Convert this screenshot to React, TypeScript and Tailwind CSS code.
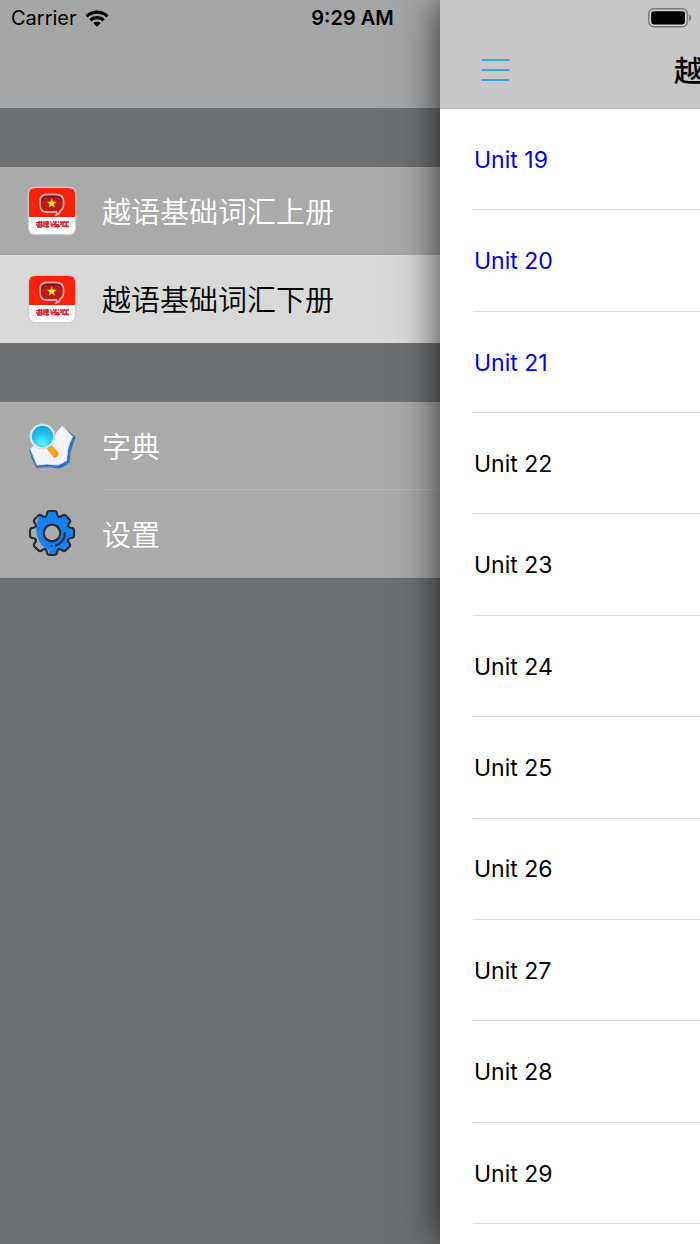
import React, { useState } from "react";

const books = ["越语基础词汇上册", "越语基础词汇下册"];
const units = [19, 20, 21, 22, 23, 24, 25, 26, 27, 28, 29];
const learned = new Set([19, 20, 21]);

function WifiIcon() {
  return (
    <svg viewBox="0 0 24 17" className="h-[17px] w-6" aria-hidden="true">
      <path d="M0.4 5.2C6.6-1.2 17.4-1.2 23.6 5.2L21.4 7.5C16.4 2.5 7.6 2.5 2.6 7.5Z" />
      <path d="M4.3 9.2C8.4 5 15.6 5 19.7 9.2L17.5 11.4C14.4 8.4 9.6 8.4 6.5 11.4Z" />
      <path d="M8.3 13.1C10.4 11.2 13.6 11.2 15.7 13.1L12 16.8Z" />
    </svg>
  );
}

function BatteryIcon() {
  return (
    <svg viewBox="0 0 44 20" className="h-5 w-11" aria-hidden="true">
      <rect x="0.8" y="0.8" width="38.6" height="18" rx="5" fill="#d2d2d2" stroke="#777" strokeWidth="1.5" />
      <rect x="3.2" y="3.2" width="33.8" height="13.2" rx="2.4" fill="#000" />
      <path d="M41.2 6.6C43.8 7.6 43.8 12 41.2 13Z" fill="#777" />
    </svg>
  );
}

function BookIcon() {
  return (
    <svg viewBox="0 0 50 50" className="h-[50px] w-[50px]" aria-hidden="true">
      <rect x="0.7" y="0.7" width="48.6" height="48.6" rx="7" fill="#c9cccc" />
      <rect x="2" y="2" width="46" height="46" rx="6" fill="#fff" />
      <path d="M2 31V8Q2 2 8 2H42Q48 2 48 8V31Z" fill="#fb200b" />
      <path d="M20 8.5H29Q36.5 8.5 36.5 15.5V18.5Q36.5 23.5 33 25Q33 28 29.5 29Q30.5 27.5 29.5 26H20Q13 26 13 19V15.5Q13 8.5 20 8.5Z" fill="#bd1a16" stroke="#c8aaa7" strokeWidth="1.8" />
      <path d="M15 15Q15.5 10.5 20 10.5H29Q34 10.5 34.5 15" fill="none" stroke="#711b18" strokeWidth="1.4" />
      <path d="M24.8 12.2L26.1 15.7L29.8 15.8L26.9 18.1L27.9 21.7L24.8 19.6L21.7 21.7L22.7 18.1L19.8 15.8L23.5 15.7Z" fill="#ffe51b" />
      <g fill="none" stroke="#d8192b" strokeWidth="1.6">
        <path d="M9 36.5H15M12 35V41M9 39H15M10 41H15M14.5 35L15 41M17 35V41M18 36H22M18 38H22M18 40.8H22M20 35V41" />
        <path d="M23.5 35.5L24.5 36.5M23.5 38H25V41M26 36H30M26 38.5H30M28 36V38M26.5 40.5H29.5V38.5M31 35.5L32 36.5M31 38V41L33 40M33 36H36V41M33 38H35M37 35.5L38.5 36.5M37 41L39 39M42 36H39.5V40.5H42" />
      </g>
    </svg>
  );
}

function DictionaryIcon() {
  return (
    <svg viewBox="0 0 50 50" className="h-[50px] w-[50px]" aria-hidden="true">
      <defs>
        <radialGradient id="lens" cx="0.5" cy="0.8" r="0.8">
          <stop offset="0" stopColor="#5cf4ff" />
          <stop offset="0.5" stopColor="#25c8f3" />
          <stop offset="1" stopColor="#17a3df" />
        </radialGradient>
        <linearGradient id="handle" x1="0" y1="0" x2="1" y2="1">
          <stop offset="0" stopColor="#d99b49" />
          <stop offset="0.5" stopColor="#ffab15" />
          <stop offset="1" stopColor="#f48512" />
        </linearGradient>
      </defs>
      <path d="M36 6L48 16.5Q45 24 43 31L42 41Q37 46 31 47Q20 44.5 10 46.5L5.5 38L3 29L8 24H27Z" fill="#2878d0" stroke="#3974b5" strokeWidth="1.2" />
      <path d="M35.5 5L45.5 15.5Q42 22 40.5 29L39.5 39.5Q35 42.5 30.5 44Q20 42 10 44L6 34L3.5 28Q7 25 10 20L25 22Q28 17 30 11Z" fill="#f4f4f6" stroke="#e4e6ea" />
      <circle cx="15.5" cy="15.5" r="12.6" fill="#e7eaed" stroke="#d5d8da" />
      <circle cx="15.5" cy="15.5" r="10.7" fill="url(#lens)" />
      <path d="M20 28Q22 24 25.5 24.5L31.5 32Q32 35.5 27 37Z" fill="url(#handle)" />
    </svg>
  );
}

const tooth =
  "M-6.7-16.2Q-5.2-17-5-19.5Q-4.8-22-2.5-22H2.5Q4.8-22 5-19.5Q5.2-17 6.7-16.2";

function SettingsIcon() {
  const angles = [0, 45, 90, 135, 180, 225, 270, 315];
  return (
    <svg viewBox="-25 -24 50 50" className="h-[50px] w-[50px]" aria-hidden="true">
      <defs>
        <clipPath id="gear-fill">
          <path d="M-6-25Q-20-12-14 5Q-11 14-3 17V25H25V-25Z" />
        </clipPath>
      </defs>
      <g fill="#1681f2" clipPath="url(#gear-fill)">
        <circle r="17.6" />
        {angles.map((a) => (
          <path key={a} d={tooth} transform={`rotate(${a})`} />
        ))}
      </g>
      <circle r="8.3" fill="#aaa" />
      <g fill="none" stroke="#252d35" strokeWidth="2.2" strokeLinejoin="round" strokeLinecap="round">
        {angles.map((a) => (
          <path key={a} d={tooth} transform={`rotate(${a})`} />
        ))}
        <circle r="8.3" />
        <path d="M13 0Q12.5 9.5 4 12.5M-0.5 13H-0.4" />
      </g>
    </svg>
  );
}

type RowProps = {
  icon: React.ReactNode;
  label: string;
  selected?: boolean;
  divided?: boolean;
  onClick?: () => void;
};

function MenuRow({ icon, label, selected, divided, onClick }: RowProps) {
  return (
    <button
      type="button"
      onClick={onClick}
      className={
        selected
          ? "flex h-[88px] w-full items-center bg-[#d9d9d9] pl-[27px] text-left text-black"
          : "flex h-[88px] w-full items-center bg-[#aaaaaa] pl-[27px] text-left text-white"
      }
    >
      {icon}
      <span
        className={
          divided
            ? "ml-[25px] flex h-full flex-1 items-center border-b border-[#b6b6b6] pt-1 text-[29px] font-[350]"
            : "ml-[25px] flex h-full flex-1 items-center pt-1 text-[29px] font-[350]"
        }
      >
        {label}
      </span>
    </button>
  );
}

export default function App() {
  const [book, setBook] = useState(1);

  return (
    <div className="relative flex min-h-screen overflow-hidden bg-[#6d7173] font-['Inter','Noto_Sans_CJK_SC',sans-serif] text-black">
      <header className="absolute inset-x-0 top-0 z-20 grid h-9 grid-cols-3 items-center pr-2 pl-[11px] text-xl">
        <div className="flex items-center gap-2">
          <span>Carrier</span>
          <WifiIcon />
        </div>
        <time className="pl-0.5 text-center font-semibold">9:29 AM</time>
        <div className="flex justify-end">
          <BatteryIcon />
        </div>
      </header>

      <aside className="w-[440px] shrink-0">
        <div className="h-[108px] bg-[#a4a6a8]" />
        <nav className="flex flex-col gap-[59px] pt-[59px]">
          <div>
            {books.map((name, i) => (
              <MenuRow key={name} icon={<BookIcon />} label={name} selected={i === book} onClick={() => setBook(i)} />
            ))}
          </div>
          <div>
            <MenuRow icon={<DictionaryIcon />} label="字典" divided />
            <MenuRow icon={<SettingsIcon />} label="设置" />
          </div>
        </nav>
      </aside>

      <main className="z-10 w-screen shrink-0 bg-white shadow-[0_0_40px_rgba(0,0,0,0.75)]">
        <div className="grid h-[109px] grid-cols-[1fr_auto_1fr] items-center border-b border-[#b8b8b8] bg-[#c7c7c7] pt-8">
          <button type="button" aria-label="Menu" className="ml-[41px] justify-self-start">
            <svg viewBox="0 0 30 24" className="h-6 w-[30px]" fill="none" stroke="#30a9e6" strokeWidth="2" aria-hidden="true">
              <path d="M0.5 2H28.5M0.5 12H28.5M0.5 22H28.5" />
            </svg>
          </button>
          <h1 className="pt-1 text-[29px] font-medium">{books[book]}</h1>
        </div>
        <ul className="grid h-[1115px] auto-rows-fr pl-[33px] text-[23px]">
          {units.map((n) => (
            <li key={n} className="border-b border-[#dcdcdc]">
              <a
                href={`#unit-${n}`}
                className={
                  learned.has(n)
                    ? "flex h-full items-center pt-0.5 pl-px text-[#0000ee]"
                    : "flex h-full items-center pt-0.5 pl-px"
                }
              >
                Unit {n}
              </a>
            </li>
          ))}
        </ul>
      </main>
    </div>
  );
}
